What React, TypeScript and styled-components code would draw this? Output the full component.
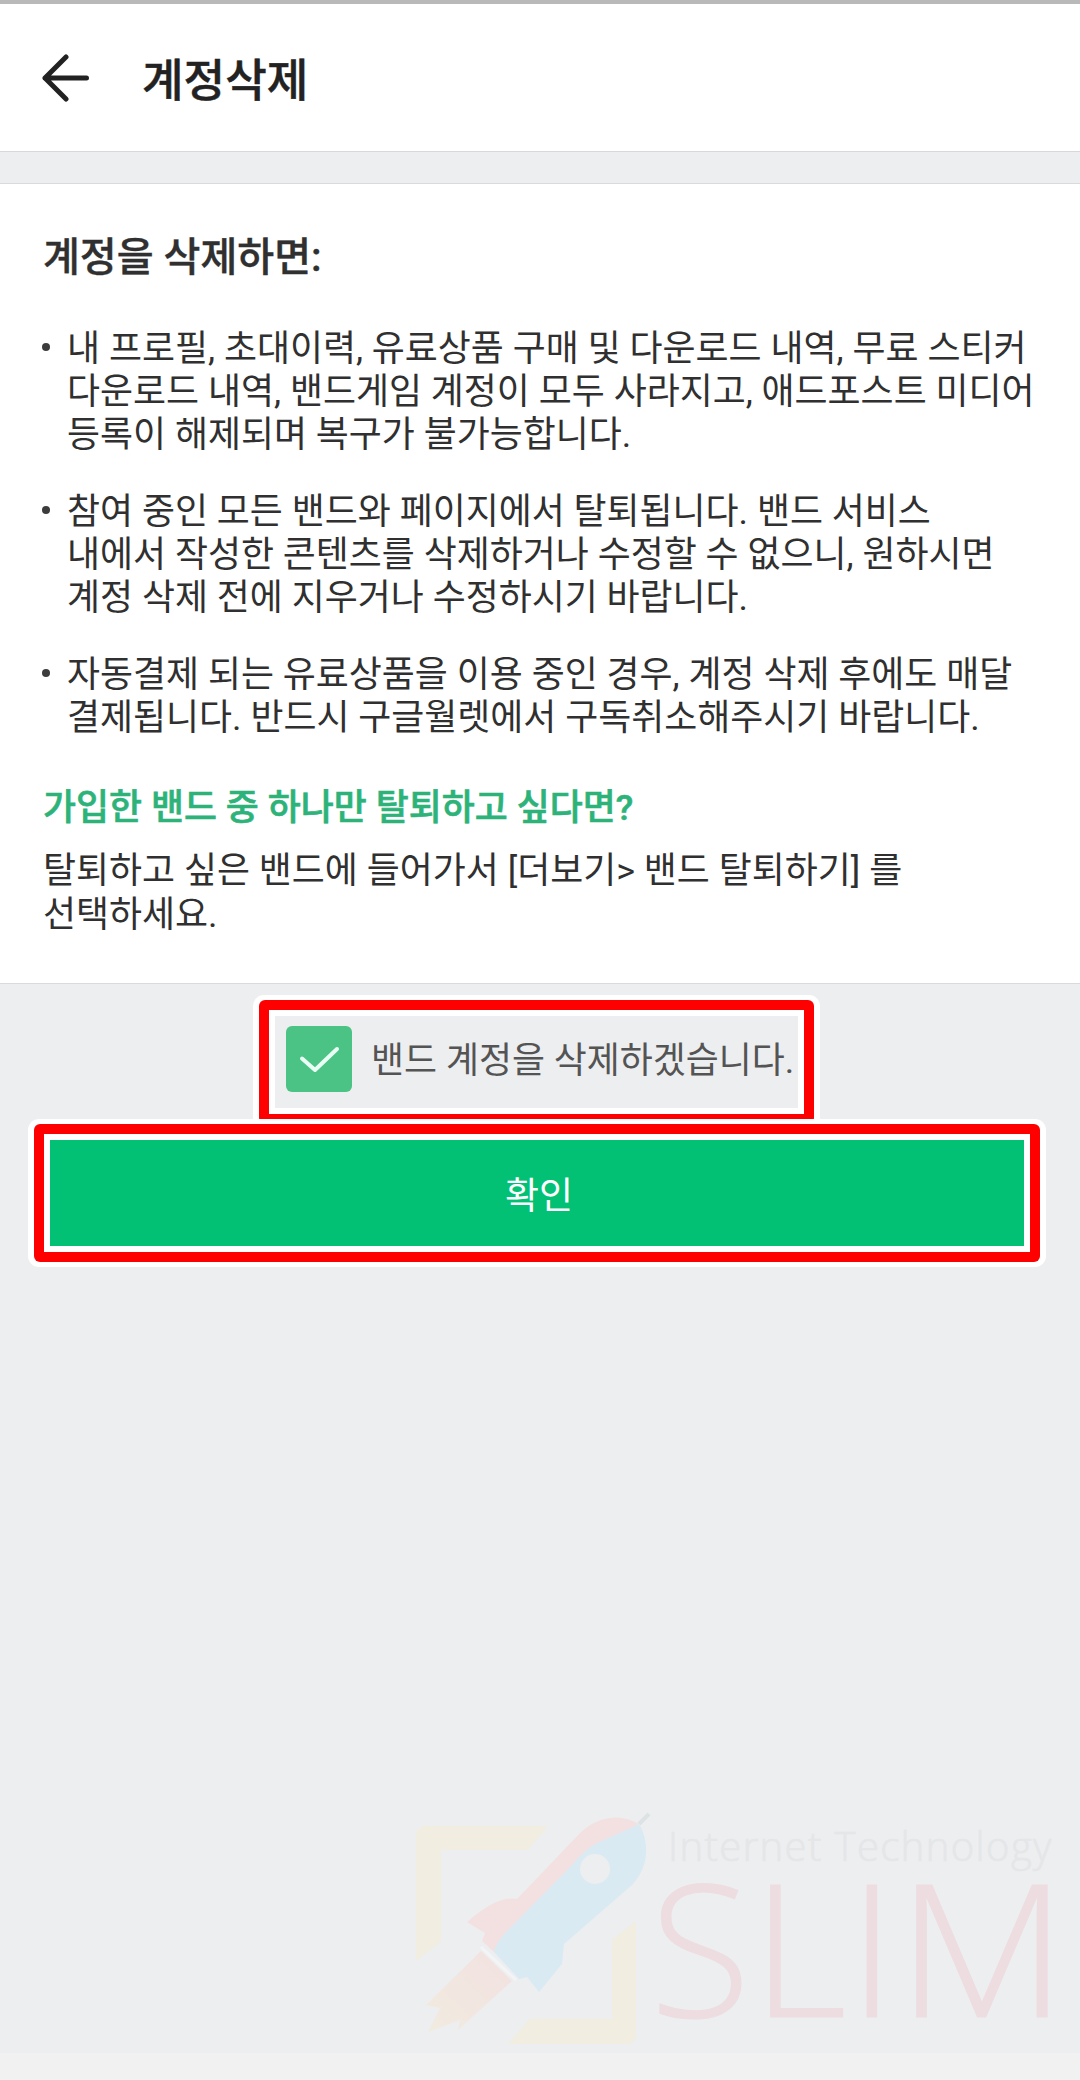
import React from "react";
import styled, { createGlobalStyle } from "styled-components";

const GlobalStyle = createGlobalStyle`
  * { box-sizing: border-box; }
  body { margin: 0; background: #edeff1; }
`;

const Screen = styled.div`
  width: 1080px;
  height: 2080px;
  display: flex;
  flex-direction: column;
  overflow: hidden;
  background: #edeef0;
  color: #303030;
  font-family: Roboto, "Noto Sans CJK KR", sans-serif;
  font-size: 35.88px;
  line-height: 43.2px;
`;

const StatusEdge = styled.div`
  height: 4px;
  flex: none;
  background: #b9b9b9;
`;

const Header = styled.header`
  height: 148px;
  flex: none;
  display: flex;
  align-items: center;
  gap: 52px;
  padding: 0 0 0 41px;
  background: #fff;
  border-bottom: 1px solid #d6d8da;
`;

const BackIcon = styled.svg`
  width: 49px;
  height: 48px;
  flex: none;
`;

const Title = styled.h1`
  margin: 0;
  padding-top: 8px;
  font-size: 45.2px;
  line-height: 60px;
  font-weight: 500;
  -webkit-text-stroke: 0.5px currentColor;
  color: #222;
`;

const Notice = styled.section`
  height: 801px;
  flex: none;
  margin-top: 31px;
  padding: 50px 43px 0;
  background: #fff;
  border-top: 1px solid #d9dadc;
  border-bottom: 1px solid #d9dadc;
`;

const NoticeHeading = styled.h2`
  margin: 0 0 46px;
  font-size: 40.1px;
  line-height: 48px;
  font-weight: 500;
  -webkit-text-stroke: 0.4px currentColor;
`;

const NoticeList = styled.ul`
  display: flex;
  flex-direction: column;
  gap: 33.4px;
  margin: 0;
  padding: 0;
  list-style: none;
`;

const NoticeItem = styled.li`
  display: flex;
  white-space: nowrap;
`;

const Dot = styled.span`
  width: 8px;
  height: 8px;
  flex: none;
  margin: 15px 17px 0 -1px;
  border-radius: 50%;
  background: #3c3c3c;
`;

const Question = styled.h3`
  margin: 47px 0 20px;
  font-size: 35.88px;
  line-height: 43px;
  font-weight: 500;
  -webkit-text-stroke: 0.6px currentColor;
  color: #2db37a;
`;

const Paragraph = styled.p`
  margin: 0;
`;

const Highlight = styled.div<{ $width: number; $left: number; $top?: number; $overlap?: number }>`
  flex: none;
  width: ${(p) => p.$width}px;
  margin: ${(p) => p.$top ?? 0}px 0 -${(p) => p.$overlap ?? 0}px ${(p) => p.$left}px;
  padding: 5px 6px;
  border-radius: 11px;
  background: #fff;
`;

const RedRing = styled.div`
  padding: 10px;
  border-radius: 6px;
  background: #fe0000;
`;

const WhiteRing = styled.div`
  padding: 6px;
  background: #fff;
`;

const AgreeRow = styled.label`
  display: flex;
  align-items: center;
  gap: 19px;
  height: 92px;
  padding: 0 0 6px 11px;
  background: #edeef0;
  color: #545454;
  white-space: nowrap;
`;

const AgreeText = styled.span`
  padding-top: 6px;
`;

const CheckBox = styled.span`
  display: flex;
  width: 66px;
  height: 66px;
  border-radius: 6px;
  background: #4bc385;
`;

const ConfirmButton = styled.button`
  display: block;
  width: 100%;
  height: 106px;
  padding: 7px 0 0 4px;
  border: 0;
  background: #02c174;
  color: #fff;
  font: inherit;
  font-size: 37px;
`;

const Watermark = styled.div`
  display: flex;
  flex: none;
  height: 263px;
  margin-top: auto;
  padding-left: 400px;
`;

const Rocket = styled.svg`
  width: 256px;
  height: 263px;
  flex: none;
`;

const WatermarkText = styled.div`
  display: flex;
  flex-direction: column;
  padding-top: 31px;
  font-family: "Open Sans", sans-serif;
  font-weight: 300;
  white-space: nowrap;
`;

const Tagline = styled.span`
  padding-left: 12px;
  font-size: 40px;
  line-height: 50px;
  letter-spacing: 1.4px;
  -webkit-text-stroke: 0.6px currentColor;
  color: #e4e6e8;
`;

const Brand = styled.span`
  font-size: 184px;
  line-height: 150px;
  margin-left: -6px;
  letter-spacing: 2px;
  -webkit-text-stroke: 1.2px currentColor;
  color: #eddde0;
`;

const WideLetter = styled.span`
  display: inline-block;
  transform: scaleX(1.07);
  transform-origin: left;
`;

const BottomStrip = styled.div`
  height: 27px;
  flex: none;
  background: #f1f1f1;
`;

export default function App() {
  return (
    <>
      <GlobalStyle />
      <Screen>
        <StatusEdge />
        <Header>
          <BackIcon viewBox="0 0 49 48" fill="none" stroke="#222" strokeWidth="5" strokeLinecap="round" strokeLinejoin="round">
            <path d="M45.5 24H4M25 3L4 24L25 45" />
          </BackIcon>
          <Title>계정삭제</Title>
        </Header>
        <Notice>
          <NoticeHeading>계정을 삭제하면:</NoticeHeading>
          <NoticeList>
            <NoticeItem>
              <Dot />
              <span>
                내 프로필, 초대이력, 유료상품 구매 및 다운로드 내역, 무료 스티커
                <br />
                다운로드 내역, 밴드게임 계정이 모두 사라지고, 애드포스트 미디어
                <br />
                등록이 해제되며 복구가 불가능합니다.
              </span>
            </NoticeItem>
            <NoticeItem>
              <Dot />
              <span>
                참여 중인 모든 밴드와 페이지에서 탈퇴됩니다. 밴드 서비스
                <br />
                내에서 작성한 콘텐츠를 삭제하거나 수정할 수 없으니, 원하시면
                <br />
                계정 삭제 전에 지우거나 수정하시기 바랍니다.
              </span>
            </NoticeItem>
            <NoticeItem>
              <Dot />
              <span>
                자동결제 되는 유료상품을 이용 중인 경우, 계정 삭제 후에도 매달
                <br />
                결제됩니다. 반드시 구글월렛에서 구독취소해주시기 바랍니다.
              </span>
            </NoticeItem>
          </NoticeList>
          <Question>가입한 밴드 중 하나만 탈퇴하고 싶다면?</Question>
          <Paragraph>
            탈퇴하고 싶은 밴드에 들어가서 [더보기&gt; 밴드 탈퇴하기] 를
            <br />
            선택하세요.
          </Paragraph>
        </Notice>
        <Highlight $width={567} $left={253} $top={11} $overlap={10}>
          <RedRing>
            <WhiteRing>
              <AgreeRow>
                <CheckBox>
                  <svg width="66" height="66" viewBox="0 0 66 66" fill="none" stroke="#e9fff5" strokeWidth="4" strokeLinecap="round" strokeLinejoin="round">
                    <path d="M16 32.5L29 44L51 23" />
                  </svg>
                </CheckBox>
                <AgreeText>밴드 계정을 삭제하겠습니다.</AgreeText>
              </AgreeRow>
            </WhiteRing>
          </RedRing>
        </Highlight>
        <Highlight $width={1018} $left={28}>
          <RedRing>
            <WhiteRing>
              <ConfirmButton type="button">확인</ConfirmButton>
            </WhiteRing>
          </RedRing>
        </Highlight>
        <Watermark>
          <Rocket viewBox="0 0 256 263">
            <defs>
              <linearGradient id="flame" x1="1" y1="0" x2="0" y2="1">
                <stop offset="0.2" stopColor="#f2e3e1" />
                <stop offset="1" stopColor="#f1ebdf" />
              </linearGradient>
            </defs>
            <g fill="#f1ede1">
              <path d="M22 36H148L128 60H41V152L16 171V42Z" />
              <path d="M236 131V249L230 254H108L130 229H212V150Z" />
            </g>
            <path d="M81 161L112 191L58 240L60 230L28 242L40 218L26 215Z" fill="url(#flame)" />
            <path d="M81 157L116 190" stroke="#f2f4f5" strokeWidth="3" />
            <path
              d="M239 34C222 23 198 26 181 42L117 109Q98 105 67 132L85 143L82 151L95 163L190 65Z"
              fill="#f3e1e1"
            />
            <path
              d="M239 34C249 51 250 76 232 95L164 154L162 174L139 202L127 187L119 189L94 162C96 151 107 141 117 131L173 74C192 50 210 49 239 34Z"
              fill="#d9eaf3"
            />
            <path d="M239 34L249 24" stroke="#dde2e5" strokeWidth="4" />
            <circle cx="195" cy="79" r="15" fill="#edeef0" />
          </Rocket>
          <WatermarkText>
            <Tagline>Internet Technology</Tagline>
            <Brand>
              SLI<WideLetter>M</WideLetter>
            </Brand>
          </WatermarkText>
        </Watermark>
        <BottomStrip />
      </Screen>
    </>
  );
}
